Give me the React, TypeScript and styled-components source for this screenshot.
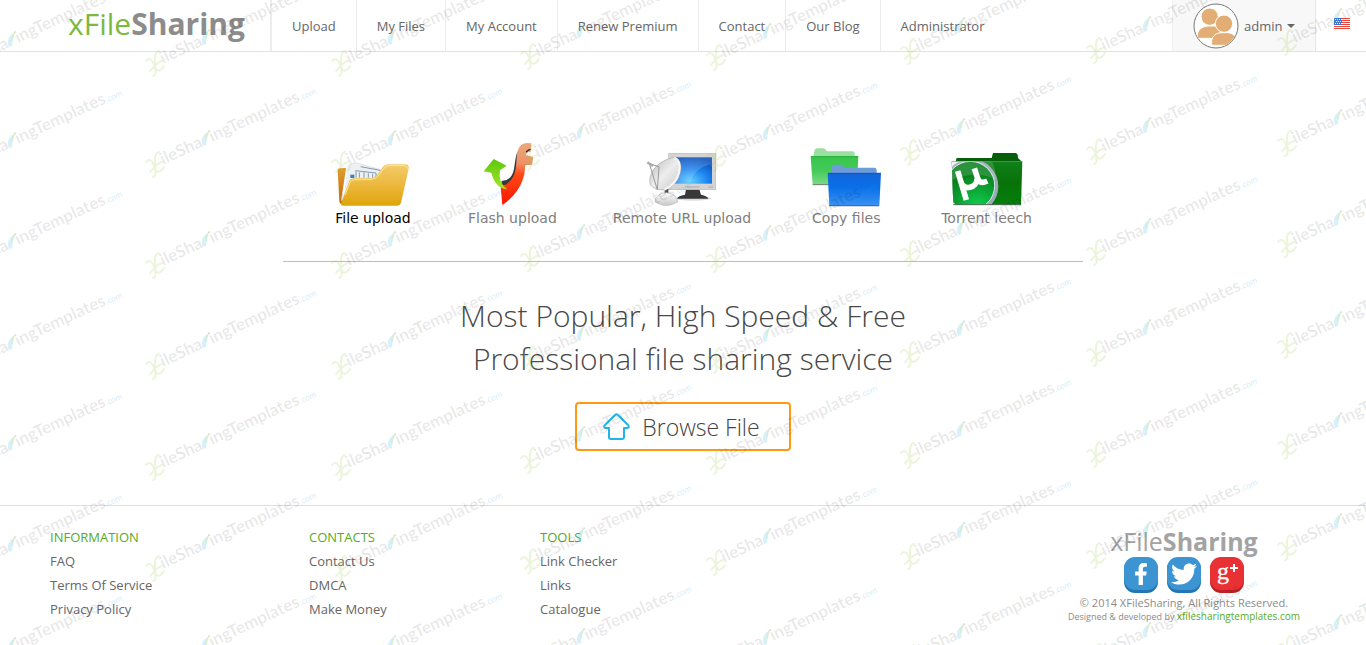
import React from 'react';
import styled, { createGlobalStyle } from 'styled-components';
import { FaFacebookF, FaTwitter } from 'react-icons/fa';

const GlobalStyle = createGlobalStyle`
  * { box-sizing: border-box; }
  body {
    margin: 0;
    background: #fff;
    color: #666;
    font-family: 'Open Sans', 'Noto Sans', sans-serif;
    font-size: 13px;
  }
  a { color: inherit; text-decoration: none; }
  button { font: inherit; color: inherit; background: none; border: 0; padding: 0; cursor: pointer; }
  svg { display: block; flex-shrink: 0; }
`;

const Page = styled.div`
  position: relative;
  min-height: 100vh;
  overflow: hidden;
`;

const Header = styled.header`
  display: flex;
  align-items: stretch;
  height: 52px;
  border-bottom: 1px solid #e2e2e2;
`;

const Brand = styled.a<{ $small?: boolean }>`
  display: block;
  font-size: ${p => (p.$small ? 25 : 30)}px;
  line-height: ${p => (p.$small ? 32 : 48)}px;
  padding-left: ${p => (p.$small ? 0 : 68)}px;
  width: ${p => (p.$small ? 'auto' : '270px')};
  font-weight: 400;
  color: ${p => (p.$small ? '#a3a3a3' : '#7cb93f')};
  strong { font-weight: 700; color: ${p => (p.$small ? '#a3a3a3' : '#8c8c8c')}; }
`;

const Nav = styled.nav`
  display: flex;
  flex: 1;
  border-left: 2px solid #ececec;
`;

const NavLink = styled.a`
  display: flex;
  align-items: center;
  padding: 0 20px;
  border-right: 1px solid #ececec;
  white-space: nowrap;
  &:last-child { border-right: 0; }
`;

const UserMenu = styled.button`
  display: flex;
  align-items: center;
  gap: 5px;
  width: 144px;
  padding: 0 20px;
  background: #f8f8f8;
  border-left: 1px solid #efefef;
  border-right: 1px solid #e6e6e6;
`;

const Caret = styled.span`
  border: 4px solid transparent;
  border-top-color: #666;
  border-bottom: 0;
`;

const LanguageButton = styled.button`
  width: 50px;
  padding: 0 16px 4px 18px;
`;

const Main = styled.main`
  display: flex;
  flex-direction: column;
  align-items: center;
  padding: 90px 0 54px;
`;

const Methods = styled.div`
  display: flex;
  justify-content: center;
  gap: 56px;
  width: 800px;
  max-width: 100%;
  height: 120px;
  border-bottom: 1px solid #bdbdbd;
`;

const Method = styled.button<{ $active?: boolean }>`
  display: flex;
  flex-direction: column;
  align-items: center;
  align-self: flex-start;
  min-width: 78px;
  font-family: 'DejaVu Sans', sans-serif;
  font-size: 14px;
  line-height: 21px;
  white-space: nowrap;
  color: ${p => (p.$active ? '#000' : '#808080')};
`;

const Headline = styled.h1`
  margin: 32px 0 22px;
  font-size: 30px;
  line-height: 43px;
  font-weight: 300;
  text-align: center;
  color: #484848;
`;

const BrowseButton = styled.button`
  display: flex;
  align-items: center;
  gap: 12px;
  height: 49px;
  padding: 0 29px 0 26px;
  border: 2px solid #ff9814;
  border-radius: 4px;
  font-size: 23px;
  font-weight: 300;
  color: #444;
`;

const Footer = styled.footer`
  display: grid;
  grid-template-columns: 259px 231px 1fr auto;
  padding: 19px 66px 20px 50px;
  border-top: 1px solid #e0e0e0;
`;

const FooterColumn = styled.div`
  line-height: 24px;
  h2 { margin: 0; font-size: 13px; line-height: 24px; font-weight: 400; color: #57ab1f; }
  ul { margin: 0; padding: 0; list-style: none; }
`;

const FooterBrand = styled.div`
  display: flex;
  flex-direction: column;
  align-items: center;
`;

const Social = styled.div`
  display: flex;
  gap: 7px;
  margin-bottom: 3px;
`;

const Legal = styled.p`
  margin: 0;
  font-size: 11px;
  line-height: 14px;
  color: #8b8b8b;
`;

const Credit = styled.p`
  margin: 0;
  font-size: 9px;
  line-height: 13px;
  color: #8b8b8b;
  a { font-size: 10px; color: #57ab1f; }
`;

const WatermarkLayer = styled.svg`
  position: absolute;
  inset: 0;
  width: 100%;
  height: 100%;
  pointer-events: none;
  font-family: Lato, 'Open Sans', sans-serif;
`;

const columns = [
  { x: -48, y: 167 }, { x: 146, y: 165 }, { x: 332, y: 165 }, { x: 521, y: 158 },
  { x: 707, y: 159 }, { x: 901, y: 153 }, { x: 1087, y: 152 }, { x: 1278, y: 144 },
];
const rows = [-1, 0, 1, 2, 3, 4, 5];

function Watermarks() {
  return (
    <WatermarkLayer aria-hidden="true">
      {columns.map(c => rows.map(r => (
        <g key={`${c.x}-${r}`} transform={`translate(${c.x} ${c.y + r * 101})`}>
          <g fill="none" stroke="#9fce50" strokeOpacity=".2" strokeWidth="2" strokeLinecap="round">
            <path d="M0 -3C4 -8 7 -3 9 3S15 7 18 2M13 -13C8 -12 9 -5 9 1S11 11 7 12M4 7C7 5 9 -1 16 -3" />
          </g>
          <path d="M57 -19Q54 -26 59 -31L63 -34Q60 -27 60 -20Z" fill="#35b3e8" fillOpacity=".2" />
          <path d="M60 -25Q60 -30 63 -34" fill="none" stroke="#c7e050" strokeOpacity=".2" strokeWidth="2" />
          <g transform="translate(17 0) rotate(-25)" fontSize="17" fontWeight="700" fill="#000" fillOpacity=".09">
            <text x="0" y="0">ileSha</text>
            <text x="54" y="0">ingTemplates</text>
            <text x="152" y="0" fontSize="9" fontStyle="italic" fontWeight="400" fill="#35a3e8" fillOpacity=".22">.com</text>
          </g>
        </g>
      )))}
    </WatermarkLayer>
  );
}

function AvatarIcon() {
  return (
    <svg width="46" height="46" viewBox="0 0 138 138">
      <defs><clipPath id="avatar"><circle cx="69" cy="69" r="64" /></clipPath></defs>
      <circle cx="69" cy="69" r="66" fill="#fff" stroke="#777" strokeWidth="3" />
      <g clipPath="url(#avatar)" fill="#e3ae75" stroke="#fff" strokeWidth="3">
        <path d="M13 106V92Q20 70 46 69H66Q78 70 82 80V106Z" />
        <circle cx="50" cy="41" r="26" />
        <path d="M56 127V112Q60 91 84 89H106Q128 92 132 112V127Z" />
        <circle cx="93" cy="62" r="26" />
      </g>
    </svg>
  );
}

function FlagIcon() {
  return (
    <svg width="16" height="11" viewBox="0 0 16 11">
      <rect width="16" height="11" fill="#fff" />
      <path d="M0 .5H16M0 2.5H16M0 4.5H16M0 6.5H16M0 8.5H16M0 10.5H16" stroke="#e8483c" />
      <rect width="8" height="7" fill="#3c6fd0" />
      <path d="M1 1.5H8M2 3.5H8M1 5.5H8" stroke="#fff" strokeDasharray="1 1" />
    </svg>
  );
}

function FileFolderIcon() {
  return (
    <svg width="72" height="66" viewBox="51 36 216 198">
      <defs>
        <linearGradient id="fold" x1="0" y1="0" x2="0" y2="1"><stop stopColor="#f3cc6a" /><stop offset=".5" stopColor="#ecb83c" /><stop offset="1" stopColor="#dfa40a" /></linearGradient>
        <linearGradient id="foldBack" x1="0" y1="0" x2="0" y2="1"><stop stopColor="#e8982a" /><stop offset="1" stopColor="#b96b08" /></linearGradient>
      </defs>
      <path d="M53 120Q54 115 60 115L95 113V222H66Q59 222 58 212Z" fill="url(#foldBack)" />
      <path d="M80 108L106 98L182 119L172 145L64 212Z" fill="#eef1f3" stroke="#ccd3d9" strokeWidth="2" />
      <path d="M70 190L82 104" stroke="#fff" strokeWidth="4" />
      <path d="M122 110L180 121M106 122L168 129V143M108 124V143M118 127V143M132 127V143M145 130V143M158 132V143" fill="none" stroke="#8299ad" strokeWidth="3" />
      <rect x="91" y="134" width="12" height="10" fill="#3b82bd" />
      <path d="M64 218L87 155Q92 145 102 145H150Q165 144 174 132L187 113Q194 103 206 103H256Q268 103 266 116L243 218Q240 227 230 227H70Q60 227 64 218Z" fill="url(#fold)" />
      <path d="M75 196L90 157Q94 149 104 149H152Q168 147 177 135L190 117Q197 107 208 107H253Q263 108 262 116" fill="none" stroke="#fbe5a0" strokeWidth="3" />
    </svg>
  );
}

function FlashIcon() {
  return (
    <svg width="72" height="66" viewBox="477 36 216 198">
      <defs>
        <linearGradient id="flash" x1="0" y1="0" x2="0" y2="1"><stop stopColor="#eba77c" /><stop offset=".33" stopColor="#ef9067" /><stop offset=".5" stopColor="#ff4a16" /><stop offset="1" stopColor="#fb1600" /></linearGradient>
        <linearGradient id="arrow" x1="0" y1="0" x2="0" y2="1"><stop stopColor="#5cc80c" /><stop offset="1" stopColor="#a5e62a" /></linearGradient>
      </defs>
      <path d="M602 64C590 92 596 126 580 142Q570 152 554 153V168Q586 166 598 134Z" fill="#333b3d" />
      <path d="M643 40Q610 33 602 62C596 85 602 114 588 141Q575 164 551 170L556 225Q600 195 616 153Q624 133 625 106L645 104L649 81L626 75Q629 65 641 65Z" fill="url(#flash)" />
      <path d="M628 67Q630 61 641 58" fill="none" stroke="#322" strokeWidth="4" />
      <path d="M530 87L569 107L549 121Q542 158 571 178Q534 174 523 128L500 124Z" fill="url(#arrow)" />
    </svg>
  );
}

function RemoteIcon() {
  return (
    <svg width="72" height="66" viewBox="153 36 216 198">
      <defs>
        <radialGradient id="screen" cx=".45" cy=".9" r=".9"><stop stopColor="#5ccdff" /><stop offset=".5" stopColor="#1c83ee" /><stop offset="1" stopColor="#074bb5" /></radialGradient>
        <linearGradient id="dish" x1="0" y1="0" x2="1" y2="1"><stop stopColor="#b5b5b5" /><stop offset=".5" stopColor="#ededed" /><stop offset="1" stopColor="#c8c8c8" /></linearGradient>
        <linearGradient id="base" x1="0" y1="0" x2="0" y2="1"><stop stopColor="#fff" /><stop offset="1" stopColor="#c8c8c8" /></linearGradient>
      </defs>
      <ellipse cx="294" cy="205" rx="54" ry="7" fill="#ddd" />
      <path d="M273 178H313L318 194Q338 198 340 206H246Q249 197 270 194Z" fill="#383838" />
      <rect x="221" y="70" width="141" height="109" fill="#d4d4d4" stroke="#bcbcbc" strokeWidth="2" />
      <rect x="236" y="82" width="115" height="79" fill="url(#screen)" />
      <path d="M236 82H351V103Q298 112 285 161H236Z" fill="#fff" opacity=".15" />
      <path d="M271 171H314M340 171H354" stroke="#aaa" strokeWidth="3" />
      <path d="M209 175H220V194H209Z" fill="#555" />
      <path d="M180 216Q181 192 214 188Q246 192 248 216Q214 237 180 216Z" fill="url(#base)" stroke="#bbb" strokeWidth="2" />
      <path d="M174 121Q194 91 238 81Q262 89 257 124Q248 166 211 179Q180 183 166 164Q160 145 174 121Z" fill="url(#dish)" stroke="#aaa" strokeWidth="2" />
      <path d="M238 83Q260 92 252 128Q242 164 208 179" fill="none" stroke="#f7f7f7" strokeWidth="6" />
      <path d="M164 104L187 179M166 102L192 110L187 179" fill="none" stroke="#999" strokeWidth="3" />
      <path d="M157 97L174 108" stroke="#aaa" strokeWidth="7" />
    </svg>
  );
}

function CopyIcon() {
  return (
    <svg width="72" height="66" viewBox="69 36 216 198">
      <defs>
        <linearGradient id="copyGreen" x1="0" y1="0" x2="0" y2="1"><stop stopColor="#38c54c" /><stop offset=".5" stopColor="#43ca59" /><stop offset="1" stopColor="#79dc88" /></linearGradient>
        <linearGradient id="copyBlue" x1="0" y1="0" x2="0" y2="1"><stop stopColor="#1565da" /><stop offset=".45" stopColor="#0870e8" /><stop offset="1" stopColor="#3a92f5" /></linearGradient>
      </defs>
      <path d="M79 80L82 62Q84 55 91 55H110Q116 56 119 64H197Q203 64 203 70V80Z" fill="#99e0a2" />
      <path d="M71 78H214L210 165H77Z" fill="url(#copyGreen)" />
      <path d="M77 164H210" stroke="#777" strokeWidth="3" />
      <path d="M72 80H213" stroke="#2fb53f" strokeWidth="4" />
      <path d="M131 130L134 111Q136 104 144 104H163Q170 105 173 113H262Q269 113 269 121V130Z" fill="#6e9cd7" />
      <path d="M122 128H282L277 227H127Z" fill="url(#copyBlue)" />
      <path d="M127 227H276" stroke="#526b91" strokeWidth="4" />
      <path d="M124 131H280" stroke="#1558bd" strokeWidth="4" />
    </svg>
  );
}

function TorrentIcon() {
  return (
    <svg width="72" height="66" viewBox="483 36 216 198">
      <defs>
        <linearGradient id="torrent" x1="0" y1="0" x2="0" y2="1"><stop stopColor="#108018" /><stop offset=".5" stopColor="#087209" /><stop offset="1" stopColor="#03800b" /></linearGradient>
        <radialGradient id="disc" cx=".65" cy=".95" r=".7"><stop stopColor="#10d252" /><stop offset="1" stopColor="#07811c" /></radialGradient>
        <clipPath id="face"><path d="M485 94H697L693 225H490Z" /></clipPath>
      </defs>
      <path d="M497 94L500 84H605L609 69H677Q684 70 684 84L694 94Z" fill="#075f09" />
      <path d="M485 94H697L693 225H490Z" fill="url(#torrent)" />
      <g clipPath="url(#face)">
        <path d="M485 94H555L500 225H485Z" fill="#eef1ee" />
        <circle cx="543" cy="169" r="82" fill="#9aa9b8" />
        <path d="M485 98V225H510Q480 200 485 98Z" fill="#edf1ee" />
        <circle cx="541" cy="167" r="73" fill="url(#disc)" stroke="#dce3e8" strokeWidth="3" />
        <path d="M470 94H606Q620 127 616 148Q560 120 485 150Z" fill="#fff" opacity=".15" />
      </g>
      <path d="M503 123L529 210M513 156C520 184 562 174 561 146M553 115L564 148Q570 163 592 153" fill="none" stroke="#fff" strokeWidth="17" />
      <path d="M490 224H692" stroke="#55685a" strokeWidth="3" />
    </svg>
  );
}

function SocialIcon({ kind }: { kind: 'facebook' | 'twitter' | 'google' }) {
  const red = kind === 'google';
  return (
    <svg width="36" height="36" viewBox="0 0 36 36">
      <rect x="1" y="1" width="34" height="35" rx="11" fill={red ? '#bf2328' : '#2277b3'} />
      <rect x="1" y="0" width="34" height="33" rx="11" fill={red ? '#e93135' : '#3c94d3'} />
      {kind === 'facebook' && <FaFacebookF x="7" y="6" size={22} color="#fff" />}
      {kind === 'twitter' && <FaTwitter x="5" y="4" size={26} color="#fff" />}
      {red && (
        <>
          <text x="8" y="22" fontFamily="'Liberation Serif', serif" fontSize="24" fill="#fff" stroke="#fff" strokeWidth=".3">g</text>
          <path d="M21 11H29M25 7V15" stroke="#fff" strokeWidth="2" />
        </>
      )}
    </svg>
  );
}

function UploadArrowIcon() {
  return (
    <svg width="27" height="27" viewBox="0 0 27 27" fill="none" stroke="#1fb4ea" strokeWidth="2" strokeLinejoin="round">
      <path d="M12 2Q13.500 .5 15 2L25 12Q27 15 24 15H21V24Q21 26 19 26H8Q6 26 6 24V15H3Q0 15 2 12Z" />
    </svg>
  );
}

const navItems = ['Upload', 'My Files', 'My Account', 'Renew Premium', 'Contact', 'Our Blog', 'Administrator'];

const methods = [
  { label: 'File upload', Icon: FileFolderIcon },
  { label: 'Flash upload', Icon: FlashIcon },
  { label: 'Remote URL upload', Icon: RemoteIcon },
  { label: 'Copy files', Icon: CopyIcon },
  { label: 'Torrent leech', Icon: TorrentIcon },
];

const footerColumns = [
  { title: 'INFORMATION', links: ['FAQ', 'Terms Of Service', 'Privacy Policy'] },
  { title: 'CONTACTS', links: ['Contact Us', 'DMCA', 'Make Money'] },
  { title: 'TOOLS', links: ['Link Checker', 'Links', 'Catalogue'] },
];

export default function App() {
  return (
    <>
      <GlobalStyle />
      <Page>
        <Header>
          <Brand href="#">xFile<strong>Sharing</strong></Brand>
          <Nav>
            {navItems.map(item => <NavLink href="#" key={item}>{item}</NavLink>)}
          </Nav>
          <UserMenu><AvatarIcon />admin<Caret /></UserMenu>
          <LanguageButton aria-label="Language"><FlagIcon /></LanguageButton>
        </Header>
        <Main>
          <Methods>
            {methods.map(({ label, Icon }, i) => (
              <Method key={label} $active={i === 0}><Icon />{label}</Method>
            ))}
          </Methods>
          <Headline>Most Popular, High Speed &amp; Free<br />Professional file sharing service</Headline>
          <BrowseButton><UploadArrowIcon />Browse File</BrowseButton>
        </Main>
        <Footer>
          {footerColumns.map(col => (
            <FooterColumn key={col.title}>
              <h2>{col.title}</h2>
              <ul>{col.links.map(link => <li key={link}><a href="#">{link}</a></li>)}</ul>
            </FooterColumn>
          ))}
          <FooterBrand>
            <Brand href="#" $small>xFile<strong>Sharing</strong></Brand>
            <Social>
              <a href="#" aria-label="Facebook"><SocialIcon kind="facebook" /></a>
              <a href="#" aria-label="Twitter"><SocialIcon kind="twitter" /></a>
              <a href="#" aria-label="Google Plus"><SocialIcon kind="google" /></a>
            </Social>
            <Legal>© 2014 XFileSharing, All Rights Reserved.</Legal>
            <Credit>Designed &amp; developed by <a href="#">xfilesharingtemplates.com</a></Credit>
          </FooterBrand>
        </Footer>
        <Watermarks />
      </Page>
    </>
  );
}
